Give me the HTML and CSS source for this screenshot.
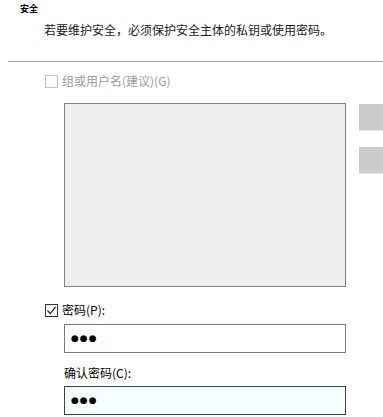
FILE: index.html
```html
<!DOCTYPE html>
<html lang="zh-CN">
<head>
    <meta charset="UTF-8">
    <title>安全</title>
    <link rel="stylesheet" href="styles.css">
</head>
<body>

    <div class="title">安全</div>
    <div class="desc">若要维护安全，必须保护安全主体的私钥或使用密码。</div>

    <div class="sep"></div>

    <div class="group">
        <!-- Group / user name (disabled) -->
        <label class="check-row disabled">
            <span class="box"></span>
            <span>组或用户名(建议)(G)</span>
        </label>

        <div class="list-row">
            <div class="listbox"></div>
            <div class="side-btns">
                <div class="side-btn"></div>
                <div class="side-btn"></div>
            </div>
        </div>

        <!-- Password -->
        <label class="check-row pw-check">
            <span class="box">
                <svg width="11" height="11" viewBox="0 0 11 11"><path d="M1.5 5.5 L4.3 8.6 L9.6 1.8" fill="none" stroke="#222" stroke-width="1.2"/></svg>
            </span>
            <span>密码(P):</span>
        </label>

        <div class="field">●●●</div>

        <div class="field-label">确认密码(C):</div>
        <div class="field focused">●●●</div>
    </div>

</body>
</html>
```

FILE: styles.css
```css
body {
    margin: 0;
    background-color: #ffffff;
    font-family: "Noto Sans CJK SC", "Microsoft YaHei", sans-serif;
    font-size: 12px;
    color: #000000;
    width: 383px;
    height: 417px;
    overflow: hidden;
}

.title {
    padding: 2px 0 0 20px;
    height: 14px;
    line-height: 14px;
    font-size: 9px;
    font-weight: bold;
}

.desc {
    margin-top: 6px;
    padding-left: 44px;
    height: 16px;
    line-height: 16px;
    font-size: 12px;
    color: #1a1a1a;
}

.sep {
    margin: 23px 0 0 8px;
    height: 1px;
    background-color: #a0a0a0;
}

.group {
    padding-left: 45px;
}

.check-row {
    display: flex;
    align-items: center;
    gap: 4px;
    height: 16px;
    line-height: 16px;
    font-size: 12px;
}

.check-row.disabled {
    margin-top: 11px;
    color: #9c9c9c;
}

.box {
    flex-shrink: 0;
    width: 11px;
    height: 11px;
    border: 1px solid #333333;
    background-color: #ffffff;
    display: flex;
    align-items: center;
    justify-content: center;
}

.disabled .box {
    border-color: #c4c4c4;
}

.list-row {
    display: flex;
    margin-top: 14px;
    padding-left: 19px;
}

.listbox {
    flex-shrink: 0;
    width: 280px;
    height: 182px;
    border: 1px solid #828282;
    background-color: #eeeeee;
}

.side-btns {
    flex-shrink: 0;
    margin-left: 13px;
    padding-top: 1px;
    display: flex;
    flex-direction: column;
    gap: 16px;
}

.side-btn {
    width: 30px;
    height: 26px;
    background-color: #cccccc;
    border-bottom: 1px solid #e6e6e6;
}

.pw-check {
    margin-top: 15px;
}

.field {
    margin: 6px 0 0 19px;
    width: 274px;
    height: 27px;
    line-height: 27px;
    padding-left: 6px;
    border: 1px solid #7a7a7a;
    background-color: #ffffff;
    font-family: "DejaVu Sans", sans-serif;
    font-size: 9px;
    letter-spacing: 1px;
}

.field-label {
    margin: 11px 0 0 19px;
    height: 17px;
    line-height: 17px;
}

.field.focused {
    margin-top: 5px;
    border-color: #2f4a48;
    background-color: #f5fffe;
}
```
